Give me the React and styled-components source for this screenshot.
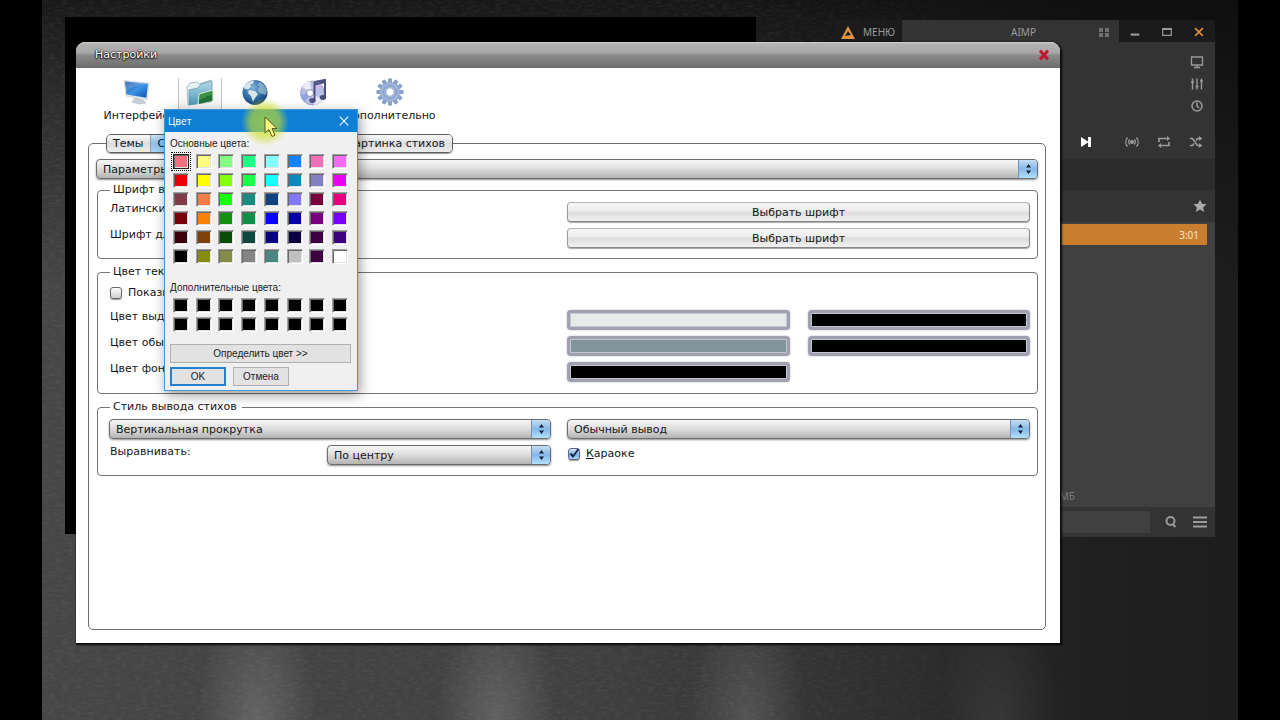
import React, { useState } from "react";
import styled, { createGlobalStyle, css } from "styled-components";

const GlobalStyle = createGlobalStyle`
  *, *::before, *::after { box-sizing: border-box; }
  body { margin: 0; background: #000; }
  button, select, input { font: inherit; color: inherit; margin: 0; }
`;

/* ---------- desktop ---------- */

const Desktop = styled.main`
  min-height: 100vh;
  padding: 0 42px;
  display: flex;
  background: #000;
  overflow: hidden;
`;

const Wallpaper = styled.div`
  position: relative;
  flex: 1;
  overflow: hidden;
  background:
    radial-gradient(ellipse 60px 130px at 18% 100%, rgba(255, 255, 255, 0.17), transparent),
    radial-gradient(ellipse 60px 130px at 38% 100%, rgba(255, 255, 255, 0.17), transparent),
    radial-gradient(ellipse 60px 130px at 59% 100%, rgba(255, 255, 255, 0.14), transparent),
    radial-gradient(ellipse 60px 130px at 80% 100%, rgba(255, 255, 255, 0.07), transparent),
    linear-gradient(180deg, rgba(10, 10, 10, 0.75), rgba(10, 10, 10, 0.4) 15%, transparent 40%),
    linear-gradient(90deg, #464646, #404040 45%, #2e2e2e 72%, #202020 88%, #1d1d1d);
`;

const Grain = styled.svg`
  position: absolute;
  inset: 0;
  width: 100%;
  height: 100%;
  mask-image: linear-gradient(90deg, #000 60%, transparent 90%);
`;

const VideoWindow = styled.div`
  position: absolute;
  left: 23px;
  top: 17px;
  width: 691px;
  height: 517px;
  background: #000;
`;

/* ---------- player ---------- */

const Player = styled.section`
  position: absolute;
  right: 23px;
  top: 20px;
  width: 381px;
  display: flex;
  flex-direction: column;
  background: #333;
  color: #9b9b9b;
  font: 10px/16px "Noto Sans", "Open Sans", sans-serif;
`;

const PlayerBar = styled.header`
  display: flex;
  height: 22px;
`;

const PlayerMenu = styled.button`
  display: flex;
  align-items: center;
  gap: 8px;
  width: 68px;
  padding: 2px 0 0 7px;
  border: 0;
  background: #1b1b1b;
`;

const PlayerTitle = styled.div`
  flex: 1;
  display: grid;
  grid-template-columns: 1fr auto 1fr;
  align-items: center;
  padding: 2px 10px 0 36px;
  & > :last-child { justify-self: end; }
`;

const WindowControls = styled.div`
  display: flex;
  justify-content: space-around;
  width: 96px;
  padding-top: 1px;
  background: #1b1b1b;
`;

const IconButton = styled.button`
  display: inline-flex;
  align-items: center;
  justify-content: center;
  width: 16px;
  height: 22px;
  padding: 0;
  border: 0;
  background: none;
  color: ${(p) => p.$color || "inherit"};
`;

const PlayerSide = styled.div`
  display: flex;
  flex-direction: column;
  align-items: flex-end;
  height: 82px;
  padding: 9px 10px 0 0;
`;

const PlayerControls = styled.div`
  display: flex;
  align-items: center;
  justify-content: flex-end;
  gap: 16px;
  height: 35px;
  padding-right: 11px;
`;

const SkipGroup = styled.div`
  padding-right: 14px;
`;

const PlayerStrip = styled.div`
  height: 31px;
  background: #2c2c2c;
`;

const PlayerTabs = styled.div`
  display: flex;
  justify-content: flex-end;
  align-items: center;
  height: 32px;
  padding-right: 7px;
`;

const Playlist = styled.div`
  display: flex;
  flex-direction: column;
  justify-content: space-between;
  height: 285px;
  padding: 2px 8px 3px;
  background: #404040;
`;

const Track = styled.div`
  display: flex;
  justify-content: flex-end;
  align-items: center;
  height: 21px;
  padding-right: 8px;
  background: #c87e2e;
  color: #f3e6d5;
`;

const PlaylistInfo = styled.div`
  width: 233px;
  text-align: right;
  color: #7c7c7c;
`;

const PlayerFooter = styled.footer`
  display: flex;
  align-items: center;
  height: 30px;
  padding: 0 7px;
  gap: 13px;
`;

const SearchField = styled.input`
  flex: 1;
  min-width: 0;
  height: 22px;
  border: 0;
  background: #404040;
`;

/* ---------- settings window ---------- */

const Settings = styled.section`
  position: absolute;
  isolation: isolate;
  left: 34px;
  right: 178px;
  top: 42px;
  display: flex;
  flex-direction: column;
  border-radius: 9px 9px 0 0;
  background: #fff;
  box-shadow: 1px 1px 2px 1px #0b0b0b;
  color: #161616;
  font: 11px/14px "DejaVu Sans", Verdana, sans-serif;
`;

const TitleBar = styled.header`
  display: flex;
  align-items: center;
  justify-content: space-between;
  height: 26px;
  padding: 0 8px 0 19px;
  border-radius: 9px 9px 0 0;
  background: linear-gradient(#d0d0d0, #b2b2b2 2px, #a9a9a9 40%, #8a8a8a 52%, #6c6c6c);
  color: #fff;
  text-shadow: 0 0 2px #000, 0 1px 2px #000, 0 0 1px #000;
`;

const Toolbar = styled.nav`
  display: flex;
  height: 66px;
  padding: 10px 25px 0;
`;

const Tool = styled.button`
  display: flex;
  flex-direction: column;
  align-items: center;
  gap: 3px;
  width: ${(p) => p.$w}px;
  height: 46px;
  margin-right: ${(p) => p.$gap || 0}px;
  padding: 0;
  border: 0;
  background: none;
  white-space: nowrap;
  ${(p) => p.$active && css`
    border: solid #c4c4c4;
    border-width: 0 1px;
    background: linear-gradient(#fff, #eee);
  `}
`;

const TabStrip = styled.div`
  position: relative;
  z-index: 1;
  align-self: flex-start;
  display: flex;
  width: 347px;
  height: 19px;
  margin: 0 0 -10px 30px;
  border: 1px solid #5e5e5e;
  border-radius: 5px;
  box-shadow: 0 1px 1px rgba(0, 0, 0, 0.4);
  overflow: hidden;
`;

const Tab = styled.button`
  flex: ${(p) => (p.$grow ? 1 : "none")};
  padding: 0 7px 0 6px;
  border: 0;
  text-align: left;
  background: ${(p) =>
    p.$active
      ? "linear-gradient(#cfe6f9, #8fc1ec 50%, #a9d6f8)"
      : "linear-gradient(#fafafa, #dedede 50%, #ececec)"};
  & + & { border-left: 1px solid #9a9a9a; }
`;

const Page = styled.div`
  display: flex;
  flex-direction: column;
  min-height: 487px;
  margin: 0 14px 13px 12px;
  padding: 15px 7px;
  border: 1px solid #6f6f6f;
  border-radius: 5px;
`;

const SelectBox = styled.div`
  display: grid;
  grid-template-columns: 1fr 19px;
  height: 20px;
  border: 1px solid #6d6d6d;
  border-radius: 4px;
  background: linear-gradient(#f7f7f7, #dcdcdc 50%, #b4b4b4);
  box-shadow: 0 1px 2px rgba(0, 0, 0, 0.45);
  overflow: hidden;
`;

const SelectInput = styled.select`
  grid-area: 1 / 1 / 2 / 3;
  min-width: 0;
  height: 18px;
  padding: 1px 24px 0 6px;
  border: 0;
  appearance: none;
  background: none;
`;

const SelectCap = styled.span`
  grid-area: 1 / 2;
  display: flex;
  align-items: center;
  justify-content: center;
  border-left: 1px solid #6b93bb;
  background: linear-gradient(#c4def4, #86b7e6 50%, #b0e0fb);
  pointer-events: none;
`;

const Group = styled.fieldset`
  min-width: 0;
  margin: ${(p) => p.$top}px 0 0 1px;
  padding: 0 7px ${(p) => p.$bottom}px 11px;
  border: 1px solid #747474;
  border-radius: 4px;
`;

const GroupTitle = styled.legend`
  height: 14px;
  padding: 0 ${(p) => p.$end || 3}px 0 3px;
  margin-left: 1px;
`;

const Row = styled.div`
  display: grid;
  grid-template-columns: 442fr 463fr;
  column-gap: 16px;
  height: 20px;
  margin-top: ${(p) => (p.$first ? 5 : 6)}px;
`;

const Split = styled.div`
  display: grid;
  grid-template-columns: ${(p) => p.$cols || "1fr 1fr"};
  column-gap: ${(p) => p.$gap || 0}px;
`;

const Caption = styled.span`
  padding-left: 1px;
  white-space: nowrap;
`;

const FontButton = styled.button`
  padding: 1px 0 0;
  border: 1px solid #8c8c8c;
  border-color: #b5b5b5 #868686 #868686 #9d9d9d;
  border-radius: 4px;
  background: linear-gradient(#f6f6f6, #ededed 45%, #dcdcdc 50%, #f1f1f1);
  box-shadow: 0 1px 1px rgba(0, 0, 0, 0.35);
`;

const ColorButton = styled.button`
  padding: 0;
  border: 3px solid #a0a1b0;
  border-radius: 4px;
  background: ${(p) => p.$color};
  background-clip: padding-box;
  box-shadow: inset 0 0 0 1px #c6c7cd, 0 0 2px #b0b0c0;
`;

const CheckLabel = styled.label`
  display: flex;
  align-items: center;
  gap: 6px;
  height: 18px;
`;

const CheckBox = styled.input`
  appearance: none;
  width: 12px;
  height: 12px;
  border: 1px solid #6a6a6a;
  border-radius: 3px;
  background: linear-gradient(#fdfdfd, #cfcfcf);
  box-shadow: 0 1px 1px rgba(0, 0, 0, 0.4);
  &:checked {
    border-color: #5c6690;
    background: linear-gradient(#d5e4f8, #7fb2e4 60%, #a9d8f8);
  }
`;

const CheckHolder = styled.span`
  display: grid;
  padding-left: 1px;
  & > * { grid-area: 1 / 1; }
  & > svg { pointer-events: none; }
`;

/* ---------- colour dialog ---------- */

const Dialog = styled.section`
  position: absolute;
  left: 122px;
  top: 109px;
  width: 194px;
  border: 1px solid #4398cf;
  background: #f0f0f0;
  box-shadow: 2px 4px 12px rgba(0, 0, 0, 0.4);
  color: #1c1c1c;
  font: 10px/14px "Liberation Sans", Arial, sans-serif;
`;

const DialogTitle = styled.header`
  display: flex;
  align-items: center;
  justify-content: space-between;
  height: 22px;
  padding: 0 5px 0 3px;
  background: #0f7fd6;
  color: #fff;
  font: 10px/14px "Open Sans", "Noto Sans", sans-serif;
`;

const DialogBody = styled.div`
  padding: 5px 5px 4px;
`;

const PaletteTitle = styled.h2`
  margin: ${(p) => p.$top || 0}px 0 3px;
  font: inherit;
`;

const Palette = styled.div`
  display: grid;
  grid-template-columns: repeat(8, 16px);
  justify-content: space-between;
  row-gap: 4px;
  padding: 0 4px 0 3px;
`;

const Swatch = styled.button`
  height: 15px;
  padding: 0;
  border: 1px solid #fff;
  border-color: #a0a0a0 #fff #fff #a0a0a0;
  background: ${(p) => p.$color};
  box-shadow: inset 1px 1px 0 #696969, inset -1px -1px 0 #e3e3e3;
  ${(p) => p.$selected && css`
    border-color: #222;
    outline: 1px dotted #000;
    outline-offset: 1px;
  `}
`;

const DialogButton = styled.button`
  width: ${(p) => (p.$wide ? "100%" : "56px")};
  height: 19px;
  padding: 0;
  border: ${(p) => (p.$primary ? "2px solid #2482cc" : "1px solid #b0b0b0")};
  background: #e2e2e2;
`;

const DialogActions = styled.div`
  display: flex;
  gap: 7px;
  margin-top: 4px;
`;

const DefineRow = styled.div`
  margin-top: 12px;
  padding-right: 1px;
`;

const Highlight = styled.div`
  position: absolute;
  left: 199px;
  top: 98px;
  width: 48px;
  height: 48px;
  border-radius: 50%;
  background: radial-gradient(closest-side, rgba(190, 222, 40, 0.7), rgba(205, 226, 30, 0.6) 60%, rgba(230, 240, 30, 0));
  pointer-events: none;
`;

const Pointer = styled.svg`
  position: absolute;
  left: 222px;
  top: 116px;
  pointer-events: none;
`;

/* ---------- icons ---------- */

const Line = ({ w = 14, h = 14, sw = 1.6, children }) => (
  <svg width={w} height={h} viewBox="0 0 14 14" fill="none" stroke="currentColor" strokeWidth={sw}>
    {children}
  </svg>
);

const MonitorPicture = () => (
  <svg width="28" height="28" viewBox="0 0 28 28">
    <defs>
      <linearGradient id="scr" x1="0" y1="0" x2="1" y2="1">
        <stop offset="0" stopColor="#1450a8" /><stop offset=".5" stopColor="#3d94e4" /><stop offset="1" stopColor="#0c50b4" />
      </linearGradient>
    </defs>
    <path d="M13 20l8 2 3 3-7 1-7-2z" fill="#c9ced6" stroke="#a9b0ba" strokeWidth=".5" />
    <path d="M2 2.500l25 2.500-2 17L4 18z" fill="#e4e9f0" stroke="#b9c2ce" strokeWidth=".5" />
    <path d="M3 3.500l23 2.300-1.700 14L4.500 16.500z" fill="url(#scr)" />
    <path d="M3 3.500l23 2.300c-9 .5-17 4-22 7z" fill="#fff" opacity=".2" />
  </svg>
);

const FolderPicture = () => (
  <svg width="28" height="28" viewBox="0 0 28 28">
    <defs>
      <linearGradient id="fold" x1="0" y1="0" x2="0" y2="1">
        <stop offset="0" stopColor="#b5dcea" /><stop offset="1" stopColor="#4c95b5" />
      </linearGradient>
    </defs>
    <path d="M1 9l3-4 7-1 2 2 12-4v22L2 27z" fill="#e6eef2" stroke="#8aa" strokeWidth=".7" />
    <path d="M3 12l9-2 3-4 11-3v20L3 27z" fill="url(#fold)" stroke="#5791a8" strokeWidth=".7" />
    <path d="M13 16l14-4v11l-15 3z" fill="#3c9147" stroke="#dcebdc" />
    <path d="M13 22c5-1 8-5 13-5v6l-13 3z" fill="#25713a" />
  </svg>
);

const GlobePicture = () => (
  <svg width="28" height="28" viewBox="0 0 28 28">
    <defs>
      <radialGradient id="glb" cx=".4" cy=".3" r=".75">
        <stop offset="0" stopColor="#82b4dc" /><stop offset=".6" stopColor="#2c68a2" /><stop offset="1" stopColor="#123c6c" />
      </radialGradient>
    </defs>
    <circle cx="14" cy="14.500" r="12.500" fill="url(#glb)" />
    <path d="M3 9c2-4 6-6 10-6.500l-1 3-3 1 1 2-3 3-4-1zM8 12l6 1 3 3-3 4-2 4-2-6-3-3z" fill="#e9eeee" opacity=".9" />
    <path d="M18 4c4 1 7 5 8 8l-1 5-3-1-4-1-1-4 2-2-2-2z" fill="#9fbfd0" opacity=".7" />
  </svg>
);

const MusicPicture = () => (
  <svg width="28" height="28" viewBox="0 0 28 28">
    <circle cx="13.500" cy="15" r="12" fill="#b9c0e2" stroke="#8c93c0" strokeWidth=".7" />
    <path d="M13 15L3 9a12 12 0 0 1 8-6zM13 15l10 7a12 12 0 0 1-8 5z" fill="#ecebfa" />
    <path d="M13 15L1.500 16a12 12 0 0 0 4 8z" fill="#93a5e2" />
    <path d="M13 15L16 3.200a12 12 0 0 1 7 5z" fill="#cdb9e6" />
    <circle cx="11" cy="15" r="3.500" fill="#fff" stroke="#8990bd" />
    <path d="M15.500 4L26 2v17M15.500 4v18M15.500 6.500L26 4" fill="none" stroke="#48507e" strokeWidth="2" />
    <ellipse cx="13.500" cy="22.500" rx="3.200" ry="2.400" fill="#48507e" />
    <ellipse cx="24" cy="19.500" rx="3.200" ry="2.400" fill="#48507e" />
  </svg>
);

const GearPicture = () => (
  <svg width="28" height="28" viewBox="0 0 28 28">
    {Array.from({ length: 12 }, (_, i) => (
      <path key={i} d="M12.600 .8h2.800l.7 5h-4.200z" fill="#8aa5cc" stroke="#5d7ca8" strokeWidth=".5" transform={`rotate(${i * 30} 14 14)`} />
    ))}
    <circle cx="14" cy="14" r="7" fill="none" stroke="#9db5d8" strokeWidth="5" />
    <circle cx="14" cy="14" r="6.500" fill="none" stroke="#7f9bc4" strokeWidth="1" />
    <circle cx="14" cy="14" r="4.200" fill="#fff" stroke="#6b89b5" strokeWidth=".8" />
  </svg>
);

const Logo = () => (
  <svg width="14" height="13" viewBox="0 0 14 13">
    <path fillRule="evenodd" d="M7 0l7 13H0zM7 5l-3 5 6-1z" fill="#de9440" />
  </svg>
);

/* ---------- parts ---------- */

function Select({ label, value }) {
  return (
    <SelectBox>
      <SelectInput aria-label={label} defaultValue={value}>
        <option>{value}</option>
      </SelectInput>
      <SelectCap>
        <svg width="7" height="12" viewBox="0 0 7 12" fill="#10213a">
          <path d="M3.500 1L6 4.500H1zM3.500 11L6 7.500H1z" />
        </svg>
      </SelectCap>
    </SelectBox>
  );
}

function Check({ checked, children }) {
  const [on, setOn] = useState(!!checked);
  return (
    <CheckLabel>
      <CheckHolder>
        <CheckBox type="checkbox" checked={on} onChange={() => setOn(!on)} />
        {on && (
          <svg width="12" height="12" viewBox="0 0 12 12" fill="none" stroke="#15264a" strokeWidth="2">
            <path d="M2.500 5.500l2.500 3L10.500 1" />
          </svg>
        )}
      </CheckHolder>
      <span>{children}</span>
    </CheckLabel>
  );
}

const BASIC = [
  "#f0707f", "#ffff80", "#84ff84", "#18ff84", "#84ffff", "#1084f8", "#f070b8", "#f26cf8",
  "#e80008", "#ffff00", "#84ff10", "#18ff48", "#18ffff", "#1088bc", "#8480c0", "#e800f0",
  "#803c48", "#f47c48", "#18ff10", "#188c80", "#104480", "#8478f4", "#78003c", "#e80080",
  "#780008", "#f88008", "#109410", "#109048", "#0800f8", "#0800a0", "#780080", "#7800f8",
  "#3c0008", "#804008", "#084c08", "#104840", "#080080", "#080040", "#3c0040", "#3c0080",
  "#000000", "#848c08", "#848c48", "#848484", "#488880", "#c0c0c0", "#3c0040", "#ffffff",
];

function PlayerWindow() {
  return (
    <Player aria-label="AIMP">
      <PlayerBar>
        <PlayerMenu><Logo />МЕНЮ</PlayerMenu>
        <PlayerTitle>
          <span />
          <span>AIMP</span>
          <svg width="10" height="9" viewBox="0 0 10 9" fill="#6f6f6f">
            <path d="M0 0h4v4H0zM6 0h4v4H6zM0 5h4v4H0zM6 5h4v4H6z" />
          </svg>
        </PlayerTitle>
        <WindowControls>
          <IconButton aria-label="Свернуть"><Line w={12} h={12} sw={2.5}><path d="M2 10h10" /></Line></IconButton>
          <IconButton aria-label="Развернуть"><Line w={12} h={12} sw={1.4}><path d="M2 3h10v8H2zM2 4h10" /></Line></IconButton>
          <IconButton aria-label="Закрыть" $color="#e09235"><Line w={12} h={12} sw={1.8}><path d="M2.500 2.500l9 9M11.500 2.500l-9 9" /></Line></IconButton>
        </WindowControls>
      </PlayerBar>
      <PlayerSide>
        <IconButton aria-label="Экран"><Line sw={1.3}><path d="M1.500 2h11v8h-11zM7 10v2M4 12.500h6" /></Line></IconButton>
        <IconButton aria-label="Эквалайзер"><Line sw={1.4}><path d="M2.500 1.500v11M7 1.500v11M11.500 1.500v11M1 5h3M5.500 9.500h3M10 4h3" /></Line></IconButton>
        <IconButton aria-label="Таймер"><Line sw={1.5}><circle cx="7" cy="7" r="5" /><path d="M7 3.500V7l2 2" /></Line></IconButton>
      </PlayerSide>
      <PlayerControls>
        <SkipGroup>
          <IconButton aria-label="Следующий" $color="#fff">
            <svg width="12" height="12" viewBox="0 0 12 12" fill="currentColor"><path d="M1 1l7 4.500V1h3v10H8V6.500L1 11z" /></svg>
          </IconButton>
        </SkipGroup>
        <IconButton aria-label="Радио">
          <Line sw={1.3}><circle cx="7" cy="7" r="1.400" fill="currentColor" /><path d="M4.700 4.500a3.500 3.500 0 0 0 0 5M9.300 4.500a3.500 3.500 0 0 1 0 5M2.500 2.500a7 7 0 0 0 0 9M11.500 2.500a7 7 0 0 1 0 9" /></Line>
        </IconButton>
        <IconButton aria-label="Повтор">
          <Line sw={1.7}><path d="M2 7V3.500h9M12 7v3.500H3" /><path d="M10 1l3 2.500L10 6zM4 8l-3 2.500L4 13z" fill="currentColor" stroke="none" /></Line>
        </IconButton>
        <IconButton aria-label="Перемешать">
          <Line sw={1.7}><path d="M1 3.500h2.500l5 7H11M1 10.500h2.500l1.500-2M7 5.500l1.500-2H11" /><path d="M10 1l3.500 2.500L10 6zM10 8l3.500 2.500L10 13z" fill="currentColor" stroke="none" /></Line>
        </IconButton>
      </PlayerControls>
      <PlayerStrip />
      <PlayerTabs>
        <IconButton aria-label="Избранное">
          <svg width="14" height="14" viewBox="0 0 14 14" fill="#aaa"><path d="M7 .6l1.900 4.200 4.600.5-3.400 3.100 1 4.600L7 10.600l-4.100 2.400 1-4.600L.5 5.300l4.600-.5z" /></svg>
        </IconButton>
      </PlayerTabs>
      <Playlist>
        <Track>3:01</Track>
        <PlaylistInfo>МБ</PlaylistInfo>
      </Playlist>
      <PlayerFooter>
        <SearchField aria-label="Поиск" />
        <IconButton aria-label="Найти"><Line sw={2}><circle cx="6.500" cy="6" r="4" /><path d="M8.500 9l3 3" /></Line></IconButton>
        <IconButton aria-label="Список"><Line w={16} h={14} sw={2}><path d="M0 2.500h14M0 7h14M0 11.500h14" /></Line></IconButton>
      </PlayerFooter>
    </Player>
  );
}

function SettingsWindow() {
  return (
    <Settings aria-label="Настройки">
      <TitleBar>
        <span>Настройки</span>
        <IconButton aria-label="Закрыть" $color="#c4152c">
          <Line w={14} h={14} sw={3}><path d="M3 2.500l8 9M11 2.500l-8 9" /></Line>
        </IconButton>
      </TitleBar>
      <Toolbar>
        <Tool $w={70} $gap={7}><MonitorPicture />Интерфейс</Tool>
        <Tool $w={44} $gap={4} $active aria-label="Файлы"><FolderPicture /></Tool>
        <Tool $w={58} aria-label="Интернет"><GlobePicture /></Tool>
        <Tool $w={58} aria-label="Музыка"><MusicPicture /></Tool>
        <Tool $w={96}><GearPicture />Дополнительно</Tool>
      </Toolbar>
      <TabStrip>
        <Tab>Темы</Tab>
        <Tab $active $grow>Стихи</Tab>
        <Tab>Картинка стихов</Tab>
      </TabStrip>
      <Page>
        <Select label="Раздел" value="Параметры" />
        <Group $top={4} $bottom={10}>
          <GroupTitle>Шрифт вывода</GroupTitle>
          <Row $first>
            <Caption>Латинский шрифт:</Caption>
            <FontButton>Выбрать шрифт</FontButton>
          </Row>
          <Row>
            <Caption>Шрифт для стихов:</Caption>
            <FontButton>Выбрать шрифт</FontButton>
          </Row>
        </Group>
        <Group $top={6} $bottom={11}>
          <GroupTitle>Цвет текста</GroupTitle>
          <Row $first><Check>Показывать</Check></Row>
          <Row>
            <Caption>Цвет выделения:</Caption>
            <Split $gap={18}>
              <ColorButton $color="#e9eaec" aria-label="Цвет выделения" />
              <ColorButton $color="#000" aria-label="Контур выделения" />
            </Split>
          </Row>
          <Row>
            <Caption>Цвет обычный:</Caption>
            <Split $gap={18}>
              <ColorButton $color="#82959d" aria-label="Цвет обычный" />
              <ColorButton $color="#000" aria-label="Контур обычный" />
            </Split>
          </Row>
          <Row>
            <Caption>Цвет фона:</Caption>
            <Split $gap={18}>
              <ColorButton $color="#000" aria-label="Цвет фона" />
            </Split>
          </Row>
        </Group>
        <Group $top={6} $bottom={10}>
          <GroupTitle $end={5}>Стиль вывода стихов</GroupTitle>
          <Row $first>
            <Select label="Стиль вывода" value="Вертикальная прокрутка" />
            <Select label="Режим вывода" value="Обычный вывод" />
          </Row>
          <Row>
            <Split $cols="218fr 224fr">
              <Caption>Выравнивать:</Caption>
              <Select label="Выравнивать" value="По центру" />
            </Split>
            <Check checked><u>К</u>араоке</Check>
          </Row>
        </Group>
      </Page>
    </Settings>
  );
}

function ColorDialog() {
  const [selected, setSelected] = useState(0);
  return (
    <Dialog role="dialog" aria-label="Цвет">
      <DialogTitle>
        <span>Цвет</span>
        <IconButton aria-label="Закрыть"><Line w={12} h={12} sw={1.2}><path d="M2 2l10 10M12 2L2 12" /></Line></IconButton>
      </DialogTitle>
      <DialogBody>
        <PaletteTitle>Основные цвета:</PaletteTitle>
        <Palette>
          {BASIC.map((c, i) => (
            <Swatch key={i} $color={c} $selected={i === selected} aria-label={c} onClick={() => setSelected(i)} />
          ))}
        </Palette>
        <PaletteTitle $top={17}>Дополнительные цвета:</PaletteTitle>
        <Palette>
          {Array.from({ length: 16 }, (_, i) => (
            <Swatch key={i} $color="#000" aria-label={`Дополнительный ${i + 1}`} />
          ))}
        </Palette>
        <DefineRow><DialogButton $wide>Определить цвет &gt;&gt;</DialogButton></DefineRow>
        <DialogActions>
          <DialogButton $primary>OK</DialogButton>
          <DialogButton>Отмена</DialogButton>
        </DialogActions>
      </DialogBody>
    </Dialog>
  );
}

export default function App() {
  return (
    <>
      <GlobalStyle />
      <Desktop>
        <Wallpaper>
          <Grain aria-hidden="true">
            <filter id="grain">
              <feTurbulence type="fractalNoise" baseFrequency="0.15 0.4" numOctaves="3" seed="4" />
              <feColorMatrix values="0 0 0 0 1  0 0 0 0 1  0 0 0 0 1  0.9 0 0 0 -0.35" />
            </filter>
            <rect width="100%" height="100%" filter="url(#grain)" opacity="0.13" />
          </Grain>
          <VideoWindow />
          <PlayerWindow />
          <SettingsWindow />
          <ColorDialog />
          <Highlight />
          <Pointer width="14" height="22" viewBox="0 0 14 22">
            <path d="M1 1v16l4-3.500 3 7 3-1.300-3-6.700h5z" fill="#fdfb86" stroke="#5c5a1c" />
          </Pointer>
        </Wallpaper>
      </Desktop>
    </>
  );
}
